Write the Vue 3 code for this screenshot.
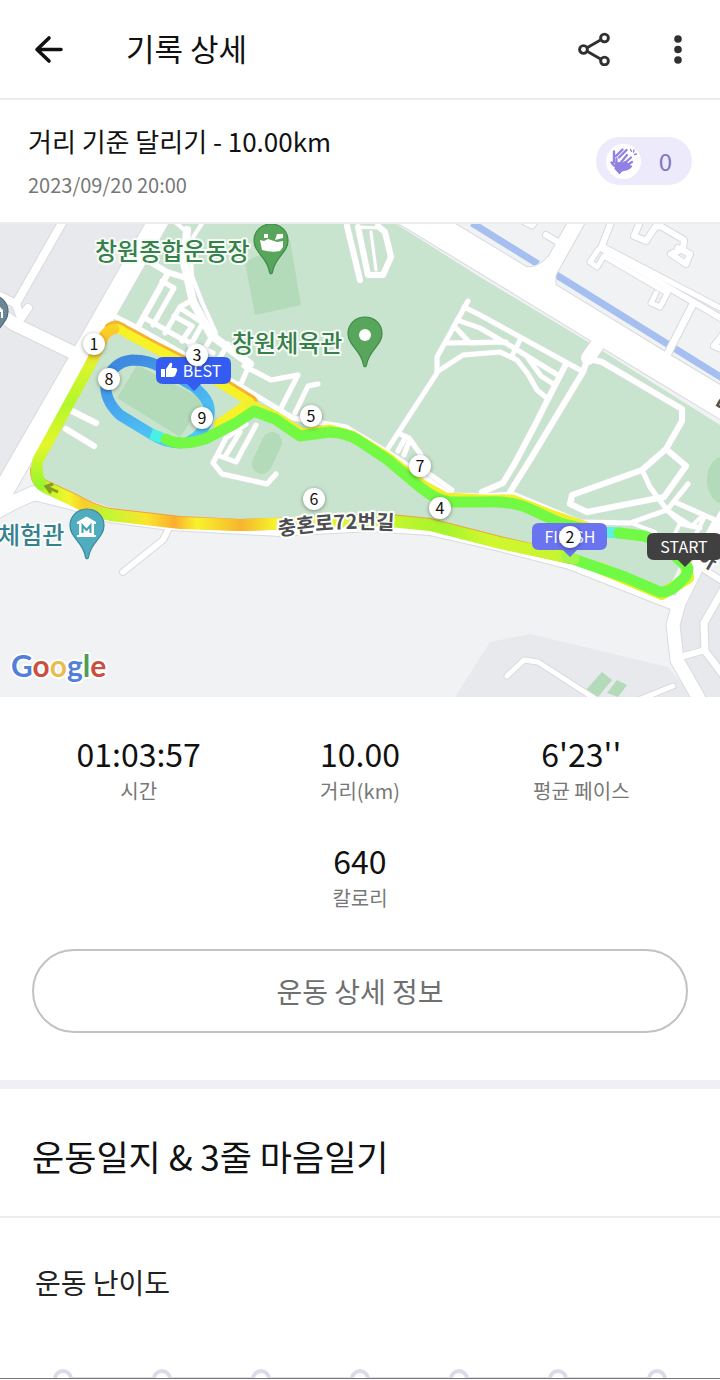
<script setup>
import { ref } from 'vue'

const stats = [
  { value: '01:03:57', label: '시간' },
  { value: '10.00', label: '거리(km)' },
  { value: "6'23''", label: '평균 페이스' },
  { value: '640', label: '칼로리' },
]

const levels = [1, 2, 3, 4, 5, 6, 7]
const level = ref(null)

const roads = [
  // west side streets
  { w: 20, d: 'M160 218L95 332L20 462L-12 518' },
  { w: 8, d: 'M66 216L17 302' },
  { w: 8, d: 'M0 296L16 304L21 318L28 308' },
  { w: 13, d: 'M0 314L14 324L80 356' },
  { w: 14, d: 'M-6 513L14 502L34 493L74 503L110 515L170 523L280 529L370 524L430 528L500 544L570 562L672 602' },
  { w: 6, d: 'M168 530L163 540L123 572' },
  // boulevard
  { w: 29, d: 'M380 195L523 282L667 370L740 414' },
  { w: 15, d: 'M580 216L552 266L540 288' },
  { w: 14, d: 'M604 335L588 358' },
  // north-east blocks
  { w: 5, d: 'M524 222L532 226L538 218' },
  { w: 6, d: 'M546 235L558 242' },
  { w: 6, d: 'M612 220L601 248L690 300L724 320' },
  { w: 5, d: 'M598 250L590 262L597 267L604 256L667 293' },
  { w: 5, d: 'M724 310L604 247' },
  { w: 6, d: 'M640 222L634 236L646 241L656 226L662 227L684 240L683 249L671 254L686 264L690 254L678 248' },
  { w: 5, d: 'M656 293L651 303L660 307L668 292' },
  { w: 7, d: 'M693 304L668 353' },
  { w: 6, d: 'M724 333L714 346L724 350' },
  // south-east streets
  { w: 13, d: 'M724 516L697 567L679 603L673 625L677 660L702 704' },
  { w: 6, d: 'M705 570L724 582' },
  { w: 7, d: 'M724 588L704 623L705 651L724 676' },
  { w: 6, d: 'M680 657L705 650' },
  { w: 5, d: 'M507 676L524 660L538 662L600 702' },
  { w: 5, d: 'M636 701L673 686' },
]

const parkRoads = [
  { w: 5, d: 'M112 315L136 327L242 387L293 418L346 427L400 460L450 495' },
  { w: 6, d: 'M138 327L167 275M147 260L167 272L192 280' },
  { w: 8, d: 'M187 230L184 262L193 302L211 335L250 364' },
  { w: 4, d: 'M203 222L190 242L192 276L202 302L216 333M175 222L188 233' },
  { w: 5, d: 'M162 281L174 288L153 325M192 300L180 307L165 333M180 308L203 323M143 317L180 338L213 353M174 316L192 326L182 341M203 323L190 346M213 335L200 356M228 344L216 364' },
  { w: 5, d: 'M248 368L240 386M244 366L271 380L298 375L281 408M318 384L308 386L295 413' },
  { w: 6, d: 'M347 226L360 280M358 227L368 275L383 275L391 257L385 232L378 226' },
  { w: 3, d: 'M358 227L380 228M371 232L376 270' },
  { w: 5, d: 'M468 301L437 357L437 373L387 450' },
  { w: 5, d: 'M464 307L480 315L580 370M457 320L480 328L514 348L556 374M454 326L470 343L503 342M447 343L506 342M440 370L463 355L500 352L517 360L528 374L537 390L547 398' },
  { w: 5, d: 'M520 340L512 356M528 358L541 376L555 385' },
  { w: 6, d: 'M566 364L545 405L535 425L515 463L503 483L482 492' },
  { w: 6, d: 'M588 358L583 372L530 460L510 492' },
  { w: 6, d: 'M594 360L602 362L682 409L682 421L666 449L642 470L572 495L570 504L587 512L664 497L686 466L666 449' },
  { w: 5, d: 'M642 470L650 487L667 510L682 524L700 528M688 484L667 510L630 523L580 522L513 494L480 496L446 495M677 503L722 523' },
  { w: 4, d: 'M631 523L655 532M667 510L692 526L700 518M680 523L672 540M704 518L692 542M714 522L700 548' },
  { w: 6, d: 'M72 411L96 423M66 429L94 446' },
  { w: 5, d: 'M246 424L226 438L213 463L222 474L267 484L276 474M256 425L236 462L220 456M240 432L226 455' },
  { w: 5, d: 'M400 434L409 438L421 455M404 440L398 451M409 442L404 455M428 473L452 490' },
]

const milestones = [
  { n: 1, x: 94, y: 344 },
  { n: 3, x: 197, y: 355 },
  { n: 8, x: 109, y: 379 },
  { n: 9, x: 202, y: 418 },
  { n: 5, x: 311, y: 416 },
  { n: 7, x: 420, y: 466 },
  { n: 6, x: 314, y: 499 },
  { n: 4, x: 440, y: 508 },
  { n: 2, x: 570, y: 537 },
]
</script>

<template>
  <div class="page">
    <header class="topbar">
      <button class="icon-btn" type="button" aria-label="뒤로">
        <svg width="30" height="30" viewBox="0 0 30 30" fill="none" stroke="#111" stroke-width="3.6" stroke-linecap="round" stroke-linejoin="round">
          <path d="M27 15.500H3M15 4L3 15.500L15 27" />
        </svg>
      </button>
      <h1>기록 상세</h1>
      <div class="actions">
        <button class="icon-btn" type="button" aria-label="공유">
          <svg width="34" height="34" viewBox="0 0 34 34" fill="none" stroke="#303030" stroke-width="2.900">
            <path d="M9.500 15.500L22.500 8M9.500 19.500L22.500 27" />
            <circle cx="5.500" cy="17.500" r="3.900" /><circle cx="26.500" cy="6" r="3.900" /><circle cx="26.500" cy="29" r="3.900" />
          </svg>
        </button>
        <button class="icon-btn" type="button" aria-label="더보기">
          <svg width="12" height="32" viewBox="0 0 12 32" fill="#303030">
            <circle cx="6" cy="6" r="3.800" /><circle cx="6" cy="16.500" r="3.800" /><circle cx="6" cy="27" r="3.800" />
          </svg>
        </button>
      </div>
    </header>

    <section class="summary">
      <div>
        <h2>거리 기준 달리기 - 10.00km</h2>
        <time datetime="2023-09-20T20:00">2023/09/20 20:00</time>
      </div>
      <button class="clap" type="button" aria-label="박수 0">
        <span class="clap-icon">
          <svg width="35" height="35" viewBox="0 0 35 35" fill="none" stroke="#9181e2" stroke-linecap="round" stroke-linejoin="round">
            <path d="M8 18V7.500M5.500 18.500L8 21.500M10 12L16.500 5.500M13 13.500L20.500 6" stroke-width="2.400" />
            <path d="M9 18L12 18L15 19L19 17L24 20L25 24L22 26L16 27.500L13.500 30.500L8.500 25Z" fill="#9181e2" stroke="none" />
            <path d="M10.500 24V14.500M13.500 20L21 11M16.500 21L25 13.500M19 22.500L26 18M20 25L25 22.500" stroke-width="2.200" />
            <path d="M25.500 7.500L24.500 5.500M27.500 8L28 6M28.500 10.500L30.500 10" stroke-width="1.300" />
          </svg>
        </span>
        <span class="clap-count">0</span>
      </button>
    </section>

    <svg class="map" viewBox="0 224 720 473" role="img" aria-label="달리기 경로 지도">
      <defs>
        <symbol id="pin" viewBox="0 0 38 54" overflow="visible">
          <path d="M19 2C9 2 2 9.500 2 18.500C2 31 15.500 35 17.500 50C17.800 52.500 20.200 52.500 20.500 50C22.500 35 36 31 36 18.500C36 9.500 29 2 19 2Z" stroke-width="1.200" />
        </symbol>
        <path id="street-line" d="M279 536Q338 526 397 530" />
        <linearGradient id="south-leg" gradientUnits="userSpaceOnUse" x1="40" y1="0" x2="600" y2="0">
          <stop offset="0" stop-color="#a6f82c" /><stop offset=".05" stop-color="#f4f52b" /><stop offset=".08" stop-color="#fbcb2b" />
          <stop offset=".12" stop-color="#bff834" /><stop offset=".19" stop-color="#fbe52b" /><stop offset=".24" stop-color="#faae2e" />
          <stop offset=".28" stop-color="#f8f22d" /><stop offset=".36" stop-color="#f6b52e" /><stop offset=".42" stop-color="#f5f42c" />
          <stop offset=".62" stop-color="#c9f52f" /><stop offset=".72" stop-color="#a4f52d" /><stop offset=".8" stop-color="#d0f72e" />
          <stop offset=".92" stop-color="#c8f52f" /><stop offset="1" stop-color="#70fa45" />
        </linearGradient>
        <linearGradient id="west-leg" gradientUnits="userSpaceOnUse" x1="0" y1="324" x2="0" y2="485">
          <stop offset="0" stop-color="#fbd525" /><stop offset=".15" stop-color="#fabd2c" /><stop offset=".25" stop-color="#dcf52b" />
          <stop offset=".5" stop-color="#b4f62c" /><stop offset=".75" stop-color="#e4f62a" /><stop offset="1" stop-color="#9bf52c" />
        </linearGradient>
        <linearGradient id="track" gradientUnits="userSpaceOnUse" x1="130" y1="360" x2="160" y2="440">
          <stop offset="0" stop-color="#3d8ae0" /><stop offset=".4" stop-color="#46a4ee" /><stop offset="1" stop-color="#4fc8f5" />
        </linearGradient>
      </defs>

      <rect x="0" y="220" width="720" height="480" fill="#f0f2f4" />
      <path d="M0 220H164L20 470L0 505Z" fill="#e8e9ed" />
      <path d="M453 700L490 642L530 634L668 667L695 700Z" fill="#e8e9ed" />
      <path d="M678 610L704 565L724 580V700H700L680 655Z" fill="#e8e9ed" />
      <path d="M166 220H390L480 277L593 345L720 425V560L690 545L665 595L570 565L430 528L280 532L110 518L34 488L32 465L112 315Z" fill="#c9e4ce" />
      <g fill="#b3dab9">
        <path d="M245 262L290 240L301 305L255 315Z" />
        <path d="M137 365L205 400L180 437L117 398Z" />
        <path d="M602 672L612 680L598 697L586 690ZM617 680L627 685L618 697L607 693Z" />
        <rect x="257" y="431" width="20" height="44" rx="10" transform="rotate(25 267 453)" />
        <ellipse cx="724" cy="480" rx="17" ry="24" />
      </g>

      <path d="M472 223L538 264M550 271L724 379" fill="none" stroke="#a5bff0" stroke-width="7" />
      <g fill="none" stroke-linecap="round" stroke-linejoin="round">
        <path v-for="(r, i) in roads" :key="'c' + i" :d="r.d" stroke="#d9dade" :stroke-width="r.w + 2" />
        <path d="M515 260L526 267Q540 267 548 256L556 268L556 288Z" fill="#fff" stroke="#d9dade" />
        <path v-for="(r, i) in parkRoads" :key="'pc' + i" :d="r.d" stroke="#dcdee2" :stroke-width="r.w + 1" />
        <path v-for="(r, i) in roads" :key="'r' + i" :d="r.d" stroke="#fff" :stroke-width="r.w" />
        <path v-for="(r, i) in parkRoads" :key="'pr' + i" :d="r.d" stroke="#fff" :stroke-width="r.w" />
      </g>

      <g fill="none" stroke-linejoin="round" stroke-linecap="round" stroke-width="11">
        <path d="M110 328Q116 324 124 330L152 345L205 372L252 401L226 424" stroke="#f6b22d" />
        <path d="M112 330Q116 326 124 332L152 347L205 374L250 402L218 424" stroke="#f7f128" stroke-width="9" />
        <path d="M250 405L276 417L302 434L330 430L352 436L388 458L422 485L446 498L482 500L512 500L548 514L600 532" stroke="#f0ef2d" />
        <path d="M600 568L662 594L688 578L686 565" stroke="#dff22c" stroke-width="12" />
        <path d="M36 470Q36 482 45 486L75 500Q92 510 110 514L180 522L240 525L300 523L380 519L430 524L500 542L570 558" stroke="#f2a032" stroke-width="12" />
        <path d="M37 470Q36 482 45 487L75 501Q92 511 110 515L180 523L240 525L300 523L380 520L430 525L500 543L570 558" stroke="url(#south-leg)" stroke-width="12" />
        <path d="M114 329Q106 331 103 338L90 365L60 420L38 460Q34 474 42 485" stroke="url(#west-leg)" />
        <path d="M180 443Q165 443 153 435L120 415Q104 400 106 383Q112 362 132 360Q150 360 162 368L193 386Q214 402 208 418Q202 436 190 441" stroke="url(#track)" />
        <path d="M151 434L162 438" stroke="#4af0e4" stroke-linecap="butt" />
        <path d="M166 439Q180 447 205 439L236 423L254 411L275 419L300 436L330 432Q346 433 358 440L388 460L420 487Q436 500 450 502L482 502Q510 500 530 509L560 523L598 532" stroke="#73f943" />
        <path d="M598 532L620 533" stroke="#5cf1dd" />
        <path d="M619 533L644 536Q658 540 672 553L688 568Q688 576 680 582Q670 593 660 592L625 577L570 558" stroke="#70fa45" />
        <path d="M567 557L574 559" stroke="#a3f54a" />
      </g>
      <path d="M58 492L47 487M53 484L46 486.500L51 493" fill="none" stroke="#899a22" stroke-width="3" />

      <g>
        <use href="#pin" x="252" y="222" width="38" height="54" fill="#58a65b" stroke="#3d8a48" />
        <path d="M260 240L264 241L268 239L277 242L283 241V247L280 251Q272 253 262 250ZM264 234H268V238H264ZM277 234H283V238L275 240Z" fill="#fff" />
        <use href="#pin" x="346" y="315" width="38" height="54" fill="#58a65b" stroke="#3d8a48" />
        <circle cx="365" cy="335" r="6" fill="#fff" />
        <use href="#pin" x="68" y="507" width="38" height="54" fill="#50adbf" stroke="#37899b" />
        <path d="M77 522L86.500 516.500L96 522V524H94V535H96V537H77V535H79V524H77Z" fill="#fff" />
        <path d="M82.500 533V525.500L86.500 530L90.500 525.500V533" fill="none" stroke="#459fb2" stroke-width="2" />
        <use href="#pin" x="-28" y="293" width="38" height="54" fill="#6b8794" stroke="#526b78" />
        <path d="M0 307L3 310V318H1V312H0Z" fill="#fff" />
      </g>

      <g class="place">
        <text x="95" y="260" fill="#36804a">창원종합운동장</text>
        <text x="232" y="352" fill="#36804a">창원체육관</text>
        <text x="-2" y="544" fill="#36808f">체험관</text>
      </g>
      <text class="street"><textPath href="#street-line">충혼로72번길</textPath></text>
      <text class="street" x="713" y="407" transform="rotate(30 713 407)">라</text>
      <text class="street" x="696" y="561" transform="rotate(30 696 561)">아</text>
      <text class="google" x="11" y="677"><tspan fill="#527fda">G</tspan><tspan fill="#c9503f">o</tspan><tspan fill="#e9bd4d">o</tspan><tspan fill="#527fda">g</tspan><tspan fill="#4d9c57">l</tspan><tspan fill="#c9503f">e</tspan></text>

      <g class="flag">
        <path d="M163 357H224Q231 357 231 364V377Q231 384 224 384H201L194 391L187 384H163Q156 384 156 377V364Q156 357 163 357Z" fill="#345cf0" />
        <path d="M161 369H165V377H161ZM166 369L170 363Q173 362 172 366L171.500 368H176Q178 369 177 371L175 376Q174 377 172 377H166Z" fill="#fff" />
        <text x="202" y="377">BEST</text>
        <path d="M539 523H600Q607 523 607 530V543Q607 550 600 550H577L570 557L563 550H539Q532 550 532 543V530Q532 523 539 523Z" fill="#6a73f0" />
        <text x="570" y="543">FINISH</text>
        <path d="M654 533H715Q722 533 722 540V553Q722 560 715 560H692L685 567L678 560H654Q647 560 647 553V540Q647 533 654 533Z" fill="#404040" />
        <text x="684" y="553">START</text>
      </g>

      <g class="milestone">
        <g v-for="m in milestones" :key="m.n">
          <circle :cx="m.x" :cy="m.y" r="11" fill="#fff" />
          <text :x="m.x" :y="m.y + 6">{{ m.n }}</text>
        </g>
      </g>
    </svg>

    <dl class="stats">
      <div v-for="s in stats" :key="s.label" class="stat">
        <dt>{{ s.label }}</dt>
        <dd>{{ s.value }}</dd>
      </div>
    </dl>

    <div class="detail">
      <button class="detail-btn" type="button">운동 상세 정보</button>
    </div>

    <section class="journal">
      <h2>운동일지 &amp; 3줄 마음일기</h2>
      <fieldset class="difficulty">
        <legend>운동 난이도</legend>
        <div class="scale">
          <input v-for="n in levels" :key="n" v-model="level" type="radio" name="difficulty" :value="n" :aria-label="`난이도 ${n}`" />
        </div>
      </fieldset>
    </section>
  </div>
</template>

<style>
body {
  background: #fff;
}
</style>

<style scoped>
.page {
  font-family: "Noto Sans CJK KR", "Noto Sans", sans-serif;
  color: #111;
  border-bottom: 1px solid #77777c;
}
h1, h2, dl, dd {
  margin: 0;
  font-weight: 400;
}
button {
  font: inherit;
  border: 0;
  padding: 0;
  background: none;
  cursor: pointer;
}
.topbar {
  display: flex;
  align-items: center;
  height: 98px;
  padding: 0 36px 0 34px;
  border-bottom: 2px solid #ededed;
}
.topbar h1 {
  flex: 1;
  margin-left: 62px;
  padding-bottom: 2px;
  font-size: 31px;
  line-height: 44px;
}
.icon-btn {
  display: flex;
}
.actions {
  display: flex;
  align-items: center;
  gap: 60px;
}
.summary {
  display: flex;
  align-items: center;
  justify-content: space-between;
  height: 122px;
  padding: 0 28px;
  border-bottom: 2px solid #ededed;
}
.summary h2 {
  font-size: 26px;
  line-height: 40px;
}
.summary time {
  display: block;
  margin-top: 8px;
  font-size: 20px;
  line-height: 32px;
  color: #777;
}
.clap {
  display: flex;
  align-items: center;
  width: 96px;
  height: 48px;
  padding: 0 20px 0 10px;
  box-sizing: border-box;
  justify-content: space-between;
  border-radius: 24px;
  background: #edeafb;
}
.clap-icon {
  display: flex;
  border-radius: 50%;
  background: #fff;
}
.clap-count {
  font-size: 24px;
  line-height: 32px;
  color: #8275c4;
}
.map {
  display: block;
  width: 100%;
  height: auto;
}
.place text {
  font-size: 24px;
  font-weight: 500;
  stroke: #f6fbf7;
  stroke-width: 4px;
  stroke-linejoin: round;
  paint-order: stroke;
}
.street {
  font-size: 20px;
  font-weight: 700;
  fill: #4c4e50;
  stroke: #fff;
  stroke-width: 4px;
  stroke-linejoin: round;
  paint-order: stroke;
}
.google {
  font-family: Lato, sans-serif;
  font-size: 30px;
  font-weight: 700;
  stroke: #fff;
  stroke-width: 4px;
  stroke-linejoin: round;
  paint-order: stroke;
}
.flag text {
  font-size: 16px;
  fill: #fff;
  text-anchor: middle;
}
.milestone text {
  font-size: 16px;
  fill: #111;
  text-anchor: middle;
}
.milestone circle {
  filter: drop-shadow(0 1px 2px #0006);
}
.stats {
  display: flex;
  flex-wrap: wrap;
  justify-content: center;
  row-gap: 31px;
  padding: 34px 28px 0;
}
.stat {
  display: flex;
  flex-direction: column-reverse;
  width: 33.333%;
  text-align: center;
}
.stat dt {
  font-size: 20px;
  line-height: 32px;
  color: #777;
}
.stat dd {
  font-size: 32px;
  line-height: 44px;
}
.detail {
  padding: 35px 32px 47px;
  border-bottom: 9px solid #f0eff6;
}
.detail-btn {
  display: block;
  width: 100%;
  height: 84px;
  border: 2px solid #c2c2c2;
  border-radius: 42px;
  font-size: 28px;
  color: #707070;
}
.journal h2 {
  padding: 43px 32px 36px;
  font-size: 35px;
  line-height: 48px;
  border-bottom: 2px solid #ededed;
}
.difficulty {
  margin: 0;
  padding: 0;
  border: 0;
  min-width: 0;
}
.difficulty legend {
  padding: 44px 35px 0;
  font-size: 28px;
  line-height: 40px;
  color: #222;
}
.scale {
  display: flex;
  justify-content: space-between;
  height: 9px;
  margin: 67px 53px 0;
  overflow: hidden;
  background: linear-gradient(#dddbea, #dddbea) 0 100% / 100% 1px no-repeat;
}
.scale input {
  appearance: none;
  box-sizing: border-box;
  width: 20px;
  height: 20px;
  margin: 0;
  border: 4px solid #dddbea;
  border-radius: 50%;
  background: #fff;
}
</style>
